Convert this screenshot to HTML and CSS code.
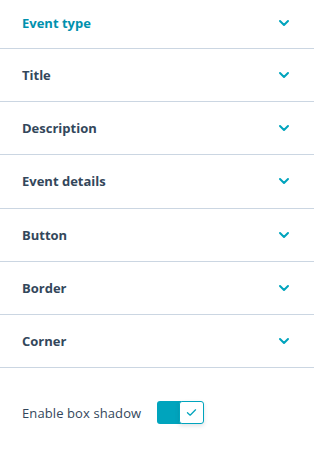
FILE: index.html
```html
<!DOCTYPE html>
<html lang="en">
<head>
  <meta charset="UTF-8" />
  <title>Event settings</title>
  <link rel="stylesheet" href="styles.css">
</head>
<body>

  <div class="panel">
    <div class="section first open">
      <span class="section-title">Event type</span>
      <svg class="chevron" viewBox="0 0 12 8"><path d="M2 2l4 4 4-4" /></svg>
    </div>
    <div class="section">
      <span class="section-title">Title</span>
      <svg class="chevron" viewBox="0 0 12 8"><path d="M2 2l4 4 4-4" /></svg>
    </div>
    <div class="section">
      <span class="section-title">Description</span>
      <svg class="chevron" viewBox="0 0 12 8"><path d="M2 2l4 4 4-4" /></svg>
    </div>
    <div class="section">
      <span class="section-title">Event details</span>
      <svg class="chevron" viewBox="0 0 12 8"><path d="M2 2l4 4 4-4" /></svg>
    </div>
    <div class="section">
      <span class="section-title">Button</span>
      <svg class="chevron" viewBox="0 0 12 8"><path d="M2 2l4 4 4-4" /></svg>
    </div>
    <div class="section">
      <span class="section-title">Border</span>
      <svg class="chevron" viewBox="0 0 12 8"><path d="M2 2l4 4 4-4" /></svg>
    </div>
    <div class="section">
      <span class="section-title">Corner</span>
      <svg class="chevron" viewBox="0 0 12 8"><path d="M2 2l4 4 4-4" /></svg>
    </div>

    <div class="option">
      <span class="option-label">Enable box shadow</span>
      <span class="toggle">
        <span class="toggle-fill"></span>
        <span class="toggle-knob">
          <svg viewBox="0 0 12 10"><path d="M1.5 5.2l3 2.8 6-6" /></svg>
        </span>
      </span>
    </div>
  </div>

</body>
</html>
```

FILE: styles.css
```css
* {
  box-sizing: border-box;
}
body {
  margin: 0;
  background: #fff;
  font-family: "Open Sans", "Noto Sans", sans-serif;
  color: #33475b;
}
.panel {
  width: 314px;
}
.section {
  display: flex;
  align-items: center;
  justify-content: space-between;
  height: 53.2px;
  padding: 0 24px 0 22px;
  border-bottom: 1px solid #cbd6e2;
}
.section.first {
  height: 49px;
  padding-bottom: 3px;
}
.section-title {
  font-size: 13px;
  font-weight: 700;
}
.section.open .section-title {
  color: #0091ae;
}
.chevron {
  width: 12px;
  height: 8px;
  fill: none;
  stroke: #00a4bd;
  stroke-width: 2;
  stroke-linecap: round;
  stroke-linejoin: round;
}
.option {
  display: flex;
  align-items: center;
  gap: 16px;
  padding: 33px 22px;
}
.option-label {
  font-size: 13px;
  letter-spacing: 0.1px;
}
.toggle {
  display: flex;
  width: 47px;
  height: 23px;
}
.toggle-fill {
  flex: 1;
  background: #00a4bd;
  border-radius: 3px 0 0 3px;
}
.toggle-knob {
  display: flex;
  align-items: center;
  justify-content: center;
  width: 25px;
  margin-left: -2px;
  background: #fff;
  border: 1px solid #00a4bd;
  border-radius: 3px;
  box-shadow: 0 2px 4px rgba(45, 62, 80, 0.15);
}
.toggle-knob svg {
  width: 11px;
  height: 9px;
  fill: none;
  stroke: #00a4bd;
  stroke-width: 1.4;
  stroke-linecap: round;
  stroke-linejoin: round;
}
```
